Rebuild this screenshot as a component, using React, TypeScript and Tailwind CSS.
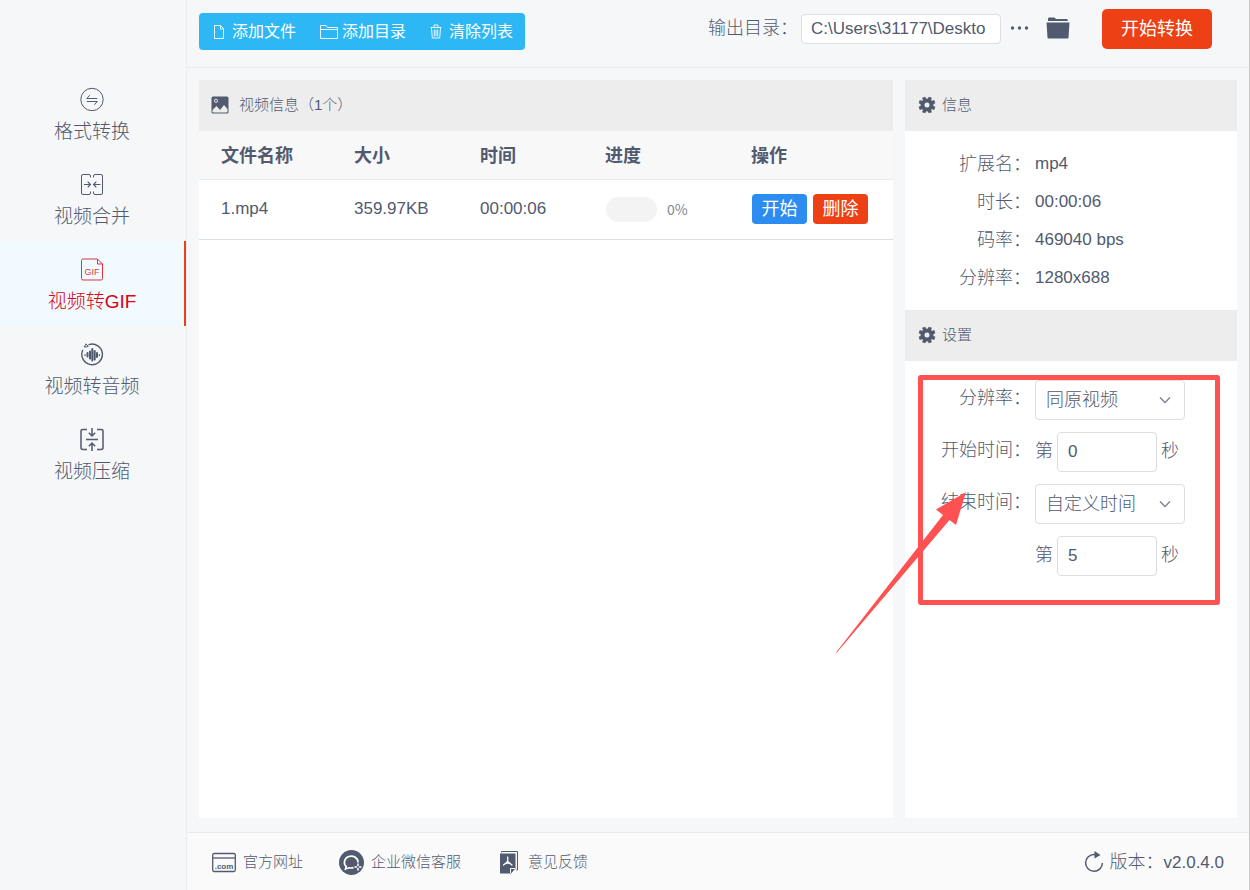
import { useState, type ReactNode } from 'react';

interface VideoFile {
  name: string;
  size: string;
  duration: string;
  progress: number;
}

interface IconProps {
  className?: string;
}

const files: VideoFile[] = [
  { name: '1.mp4', size: '359.97KB', duration: '00:00:06', progress: 0 },
];

const info = [
  { label: '扩展名', value: 'mp4' },
  { label: '时长', value: '00:00:06' },
  { label: '码率', value: '469040 bps' },
  { label: '分辨率', value: '1280x688' },
];

// ---------- 侧边栏图标 ----------

const ConvertIcon = () => (
  <svg className="h-6 w-6" viewBox="0 0 24 24" fill="none" stroke="currentColor" strokeWidth="1">
    <circle cx="12" cy="12.500" r="11.200" />
    <path d="M6.800 11.500H17.300M6.800 11.500L9.800 8.200M17.300 14.500H6.800M17.300 14.500L14.300 17.800" />
  </svg>
);

const MergeIcon = () => (
  <svg className="h-6 w-6" viewBox="0 0 24 24" fill="none" stroke="currentColor" strokeWidth="1">
    <path d="M10.500 5.500V4Q10.500 2.500 9 2.500H3Q1.500 2.500 1.500 4V21Q1.500 22.500 3 22.500H9Q10.500 22.500 10.500 21V19.500" />
    <path d="M13.500 5.500V4Q13.500 2.500 15 2.500H21Q22.500 2.500 22.500 4V21Q22.500 22.500 21 22.500H15Q13.500 22.500 13.500 21V19.500" />
    <path strokeWidth="1.200" d="M4 12.500H10M7.700 9.700L10.400 12.500L7.700 15.300M20.500 12.500H14M16.300 9.700L13.600 12.500L16.300 15.300" />
  </svg>
);

const GifIcon = () => (
  <svg className="h-6 w-6" viewBox="0 0 24 24" fill="none" stroke="currentColor" strokeWidth="1" opacity=".8">
    <path d="M17.500 2H3Q1.500 2 1.500 3.500V21.500Q1.500 23 3 23H21Q22.500 23 22.500 21.500V7ZM17.500 2V7H22.500" />
    <text x="12" y="17.500" textAnchor="middle" fontSize="9" fontFamily="Liberation Sans" fill="currentColor" stroke="none">
      GIF
    </text>
  </svg>
);

const AudioIcon = () => (
  <svg className="h-6 w-6" viewBox="0 0 24 24" fill="none" stroke="currentColor" strokeLinecap="round">
    <path strokeWidth="1.400" d="M9 2.600A10.300 10.300 0 1 1 2.600 8.500" />
    <path strokeWidth="1" d="M4.500 4.800L6 1.800L8 4.200Z" />
    <path strokeWidth="2" d="M7.500 11V14.500M10 9.500V16.500M12.300 7V18.500M14.700 9V17.500M17 11V15" />
    <path strokeWidth="1.200" d="M5 12.500V13.500M19.300 12.500V13.500" />
  </svg>
);

const CompressIcon = () => (
  <svg className="h-6 w-6" viewBox="0 0 24 24" fill="none" stroke="currentColor" strokeWidth="1.500">
    <path d="M7 2.500H3Q1 2.500 1 4.200V20.800Q1 22.500 3 22.500H7M17 2.500H21Q23 2.500 23 4.200V20.800Q23 22.500 21 22.500H17" />
    <path d="M6 12.500H18M12 1V8.700M8.800 5.800L12 9L15.200 5.800M12 24V16.300M8.800 19.200L12 16L15.200 19.200" />
  </svg>
);

// ---------- 工具栏图标 ----------

const FileIcon = () => (
  <svg className="h-4 w-3" viewBox="0 0 12 16" fill="none" stroke="currentColor" opacity=".9">
    <path d="M7.500 1.500H1.500V14.500H10.500V4.500L7.500 1.500V5H10.500" />
  </svg>
);

const FolderOutlineIcon = () => (
  <svg className="h-4 w-[18px]" viewBox="0 0 18 16" fill="none" stroke="currentColor" opacity=".9">
    <path d="M.5 14.500V1.500H6L7.500 3.500H17.500V14.500ZM.5 5.500H17.500" />
  </svg>
);

const TrashIcon = () => (
  <svg className="h-4 w-3" viewBox="0 0 12 16" fill="none" stroke="currentColor" opacity=".9">
    <path d="M.5 3.500H11.500M4 3.500V1H8V3.500M1.500 4L2.300 14H9.700L10.500 4M4.300 5.500V12.500M6 5.500V12.500M7.700 5.500V12.500" />
  </svg>
);

const FolderIcon = () => (
  <svg className="h-6 w-6" viewBox="0 0 24 24" fill="currentColor">
    <path d="M2 5V2.800Q2 1.500 3.300 1.500H8.500L10 3H20.500Q22 3 22 5Z" />
    <path d="M.5 6.500H23.500L22.500 21.500Q22.400 22.500 21.500 22.500H2.500Q1.600 22.500 1.500 21.500Z" />
  </svg>
);

// ---------- 面板图标 ----------

const PictureIcon = ({ className }: IconProps) => (
  <svg className={className} viewBox="0 0 18 18">
    <rect x=".5" y=".5" width="17" height="17" rx="1.500" fill="#515a6e" />
    <circle cx="5" cy="4.800" r="1.600" fill="none" stroke="#ededed" strokeWidth="1" />
    <path d="M1.500 15.500V14L5.500 10L9 14L13 9L16.500 13V15.500Q16.500 16.500 15.500 16.500H2.500Q1.500 16.500 1.500 15.500Z" fill="#ededed" />
  </svg>
);

const GearIcon = ({ className }: IconProps) => (
  <svg className={className} viewBox="0 0 18 18">
    <circle cx="9" cy="9" r="4.500" fill="none" stroke="#515a6e" strokeWidth="4" />
    <g stroke="#515a6e" strokeWidth="3.400">
      <path d="M6.700 4L5.700 1.200M11.300 4L12.300 1.200M6.700 14L5.700 16.800M11.300 14L12.300 16.800" />
      <path d="M4 6.700L1.200 5.700M4 11.300L1.200 12.300M14 6.700L16.800 5.700M14 11.300L16.800 12.300" />
    </g>
  </svg>
);

const ChevronIcon = () => (
  <svg className="pointer-events-none absolute top-3.5 right-3.5 h-3 w-3" viewBox="0 0 12 12" fill="none" stroke="#808695" strokeWidth="1.500">
    <path d="M1 3.500L6 8.500L11 3.500" />
  </svg>
);

// ---------- 底部图标 ----------

const WebsiteIcon = () => (
  <svg className="h-6 w-6" viewBox="0 0 24 24" fill="none" stroke="currentColor" strokeWidth="1.300">
    <rect x=".7" y="3.500" width="22.600" height="18" rx="1.500" />
    <path d="M.7 8H23.300" />
    <text x="12" y="18.500" textAnchor="middle" fontSize="8" fontWeight="bold" fontFamily="Liberation Sans" fill="currentColor" stroke="none">
      .com
    </text>
  </svg>
);

const WechatIcon = () => (
  <svg className="h-[25px] w-[25px]" viewBox="0 0 25 25" fill="none">
    <circle cx="12.500" cy="12.500" r="12.500" fill="#515a6e" />
    <path stroke="#fff" strokeWidth="1.700" d="M14.500 17.600A7.300 6.300 0 0 1 10 17.800L6.500 19L7.200 16.500A6.800 6.200 0 1 1 19 12.500" />
    <path stroke="#fff" strokeWidth="1.600" strokeLinecap="round" d="M19 14V15.500M19 18.500V20M16 17H17.500M20.500 17H22" />
  </svg>
);

const FeedbackIcon = () => (
  <svg className="h-6 w-6" viewBox="0 0 24 24" fill="none">
    <path d="M4.500 2.500V1.500H20.500V20H19.300" stroke="#515a6e" strokeWidth="1" />
    <path d="M3 3.500H18.500V18.500L14 23.500H3Z" fill="#515a6e" />
    <path d="M13.500 23V18.500H18" stroke="#fafafa" />
    <path d="M10.700 7V11.500L6.500 15M10.700 11.500L15 15M8 13.800Q10.700 12.500 13.500 13.800" stroke="#fafafa" strokeWidth="1.300" strokeLinecap="round" />
  </svg>
);

const RefreshIcon = () => (
  <svg className="h-[22px] w-5" viewBox="0 0 20 22" fill="none" stroke="currentColor" strokeWidth="1.500">
    <path d="M12.500 3.500H10A8.400 8.400 0 1 0 18.400 12" />
    <path d="M10.500 0L16.500 4L10.500 7.500Z" fill="currentColor" stroke="none" />
  </svg>
);

const menus = [
  { key: 'convert', label: '格式转换', icon: <ConvertIcon /> },
  { key: 'merge', label: '视频合并', icon: <MergeIcon /> },
  { key: 'gif', label: '视频转GIF', icon: <GifIcon /> },
  { key: 'audio', label: '视频转音频', icon: <AudioIcon /> },
  { key: 'compress', label: '视频压缩', icon: <CompressIcon /> },
];

const PanelTitle = ({ icon, children }: { icon: ReactNode; children: ReactNode }) => (
  <h2 className="flex h-[51px] items-center bg-[#ededed] px-3 pb-px text-[15px]">
    {icon}
    {children}
  </h2>
);

interface SecondsInputProps {
  id: string;
  label: string;
  value: string;
  onChange: (value: string) => void;
}

const SecondsInput = ({ id, label, value, onChange }: SecondsInputProps) => (
  <div className="flex h-10 items-center gap-1">
    <span className="pb-0.5">第</span>
    <input
      id={id}
      aria-label={label}
      value={value}
      onChange={(e) => onChange(e.target.value)}
      className="h-10 w-[100px] rounded border border-[#dcdee2] bg-white px-2.5 text-[17px] outline-none"
    />
    <span className="pb-0.5">秒</span>
  </div>
);

const selectClass =
  'h-10 w-[150px] appearance-none rounded border border-[#dcdee2] bg-white px-2.5 outline-none';

const fieldLabelClass = 'pt-[5px] pr-1 text-right';

export default function App() {
  const [active, setActive] = useState('gif');
  const [outputDir, setOutputDir] = useState('C:\\Users\\31177\\Deskto');
  const [resolution, setResolution] = useState('same');
  const [endMode, setEndMode] = useState('custom');
  const [start, setStart] = useState('0');
  const [end, setEnd] = useState('5');

  return (
    <div className="flex min-h-screen border-r border-[#c8c8c8] bg-[#f5f7f9] font-['Liberation_Sans','Noto_Sans_CJK_SC',sans-serif] text-[18px] font-light text-[#515a6e]">
      <nav className="w-[187px] shrink-0 border-r border-[#ebedf0] pt-[71px]">
        {menus.map((menu) => (
          <button
            key={menu.key}
            type="button"
            onClick={() => setActive(menu.key)}
            className={`flex h-[85px] w-full flex-col items-center border-r-2 pt-4 text-[19px] leading-7 ${
              active === menu.key ? 'border-[#ed4014] bg-[#f0faff] text-[#dc0010]' : 'border-transparent'
            }`}
          >
            {menu.icon}
            <span className="mt-[7px]">{menu.label}</span>
          </button>
        ))}
      </nav>

      <div className="flex min-w-0 flex-1 flex-col">
        <header className="flex h-[68px] items-start border-b border-[#e8eaec] pr-[37px] pl-3">
          <div className="mt-[13px] flex h-[37px] rounded bg-[#2db7f5] pl-0.5 text-base font-normal text-white">
            <button type="button" className="flex items-center gap-[7px] px-3">
              <FileIcon />
              添加文件
            </button>
            <button type="button" className="flex items-center gap-1 px-3">
              <FolderOutlineIcon />
              添加目录
            </button>
            <button type="button" className="flex items-center gap-[7px] px-3">
              <TrashIcon />
              清除列表
            </button>
          </div>

          <div className="mt-[9px] ml-auto flex h-10 items-center">
            <label htmlFor="output-dir" className="pb-0.5">输出目录：</label>
            <input
              id="output-dir"
              value={outputDir}
              onChange={(e) => setOutputDir(e.target.value)}
              className="ml-[3px] h-[30px] w-[200px] rounded border border-[#dcdee2] bg-white px-[9px] text-[17px] outline-none"
            />
            <button type="button" aria-label="选择目录" className="ml-2 pb-0.5">
              <svg className="h-6 w-5" viewBox="0 0 20 24" fill="currentColor">
                <circle cx="3.500" cy="12" r="1.700" />
                <circle cx="10.500" cy="12" r="1.700" />
                <circle cx="17.500" cy="12" r="1.700" />
              </svg>
            </button>
            <button type="button" aria-label="打开目录" className="ml-[17px] pb-0.5">
              <FolderIcon />
            </button>
            <button type="button" className="ml-8 h-10 w-[110px] rounded-[5px] bg-[#ed4014] font-normal text-white">
              开始转换
            </button>
          </div>
        </header>

        <main className="flex flex-1 gap-3 p-3 pb-3.5">
          <section className="min-w-0 flex-1 bg-white">
            <PanelTitle icon={<PictureIcon className="mr-2.5 h-[18px] w-[18px]" />}>视频信息（1个）</PanelTitle>
            <table className="w-full table-fixed text-left">
              <thead>
                <tr className="h-12 border-b border-[#e8eaec] bg-[#f8f8f9]">
                  <th className="w-[133px] pt-[3px] pl-[22px] font-bold">文件名称</th>
                  <th className="w-[126px] pt-[3px] pl-[22px] font-bold">大小</th>
                  <th className="w-[125px] pt-[3px] pl-[22px] font-bold">时间</th>
                  <th className="w-[146px] pt-[3px] pl-[22px] font-bold">进度</th>
                  <th className="pt-[3px] pl-[22px] font-bold">操作</th>
                </tr>
              </thead>
              <tbody>
                {files.map((file) => (
                  <tr key={file.name} className="h-[60px] border-b border-[#dcdee2] text-[17px]">
                    <td className="pl-[22px]">{file.name}</td>
                    <td className="pl-[22px]">{file.size}</td>
                    <td className="pl-[22px]">{file.duration}</td>
                    <td className="pl-[23px]">
                      <div className="flex items-center gap-2.5">
                        <div className="h-[25px] w-[51px] overflow-hidden rounded-full bg-[#f3f3f3]">
                          <div className="h-full bg-[#2d8cf0]" style={{ width: `${file.progress}%` }} />
                        </div>
                        <span className="font-['Noto_Sans_CJK_SC',sans-serif] text-sm font-normal text-[#808695]">
                          {file.progress}%
                        </span>
                      </div>
                    </td>
                    <td className="pl-[23px]">
                      <div className="flex gap-1.5 text-[18px] font-normal text-white">
                        <button type="button" className="h-[30px] w-[55px] rounded bg-[#2d8cf0]">开始</button>
                        <button type="button" className="h-[30px] w-[55px] rounded bg-[#ed4014]">删除</button>
                      </div>
                    </td>
                  </tr>
                ))}
              </tbody>
            </table>
          </section>

          <aside className="w-[332px] shrink-0 bg-white">
            <PanelTitle icon={<GearIcon className="mr-1.5 ml-px h-[18px] w-[18px]" />}>信息</PanelTitle>
            <dl className="pt-3.5 pb-[13px]">
              {info.map((item) => (
                <div key={item.label} className="flex h-[38px] items-center">
                  <dt className="w-[130px] pr-1 text-right">{item.label}：</dt>
                  <dd className="text-[17px]">{item.value}</dd>
                </div>
              ))}
            </dl>

            <PanelTitle icon={<GearIcon className="mr-1.5 ml-px h-[18px] w-[18px]" />}>设置</PanelTitle>
            <div className="relative pt-[19px]">
              <div className="grid grid-cols-[130px_1fr] gap-y-3">
                <label htmlFor="resolution" className={fieldLabelClass}>分辨率：</label>
                <div className="relative w-[150px]">
                  <select
                    id="resolution"
                    value={resolution}
                    onChange={(e) => setResolution(e.target.value)}
                    className={selectClass}
                  >
                    <option value="same">同原视频</option>
                  </select>
                  <ChevronIcon />
                </div>

                <label htmlFor="start-second" className={fieldLabelClass}>开始时间：</label>
                <SecondsInput id="start-second" label="开始时间（秒）" value={start} onChange={setStart} />

                <label htmlFor="end-mode" className={fieldLabelClass}>结束时间：</label>
                <div className="relative w-[150px]">
                  <select
                    id="end-mode"
                    value={endMode}
                    onChange={(e) => setEndMode(e.target.value)}
                    className={selectClass}
                  >
                    <option value="custom">自定义时间</option>
                  </select>
                  <ChevronIcon />
                </div>

                <div className="col-start-2">
                  <SecondsInput id="end-second" label="结束时间（秒）" value={end} onChange={setEnd} />
                </div>
              </div>

              {/* 红框和箭头标注 */}
              <div className="pointer-events-none absolute top-3.5 left-[13px] h-[230px] w-[302px] rounded-[3px] border-5 border-[#fd5251]" />
              <svg
                className="pointer-events-none absolute top-[131px] left-[-69px] h-[162px] w-[131px]"
                viewBox="0 0 131 162"
                fill="#fd5251"
              >
                <path d="M0 160.500L107 23L100 17.500L130 0L120 33L113.500 28L.5 161Z" />
              </svg>
            </div>
          </aside>
        </main>

        <footer className="flex h-[58px] items-center gap-9 border-t border-[#e8eaec] bg-[#fafafa] px-[25px] pt-px text-[15px]">
          <a href="#site" className="flex items-center gap-[7px]">
            <WebsiteIcon />
            官方网址
          </a>
          <a href="#wechat" className="flex items-center gap-[7px]">
            <WechatIcon />
            企业微信客服
          </a>
          <a href="#feedback" className="flex items-center gap-[7px]">
            <FeedbackIcon />
            意见反馈
          </a>
          <button type="button" className="ml-auto flex items-center gap-1.5 text-[18px]">
            <RefreshIcon />
            <span>
              版本：<span className="text-[17px]">v2.0.4.0</span>
            </span>
          </button>
        </footer>
      </div>
    </div>
  );
}
